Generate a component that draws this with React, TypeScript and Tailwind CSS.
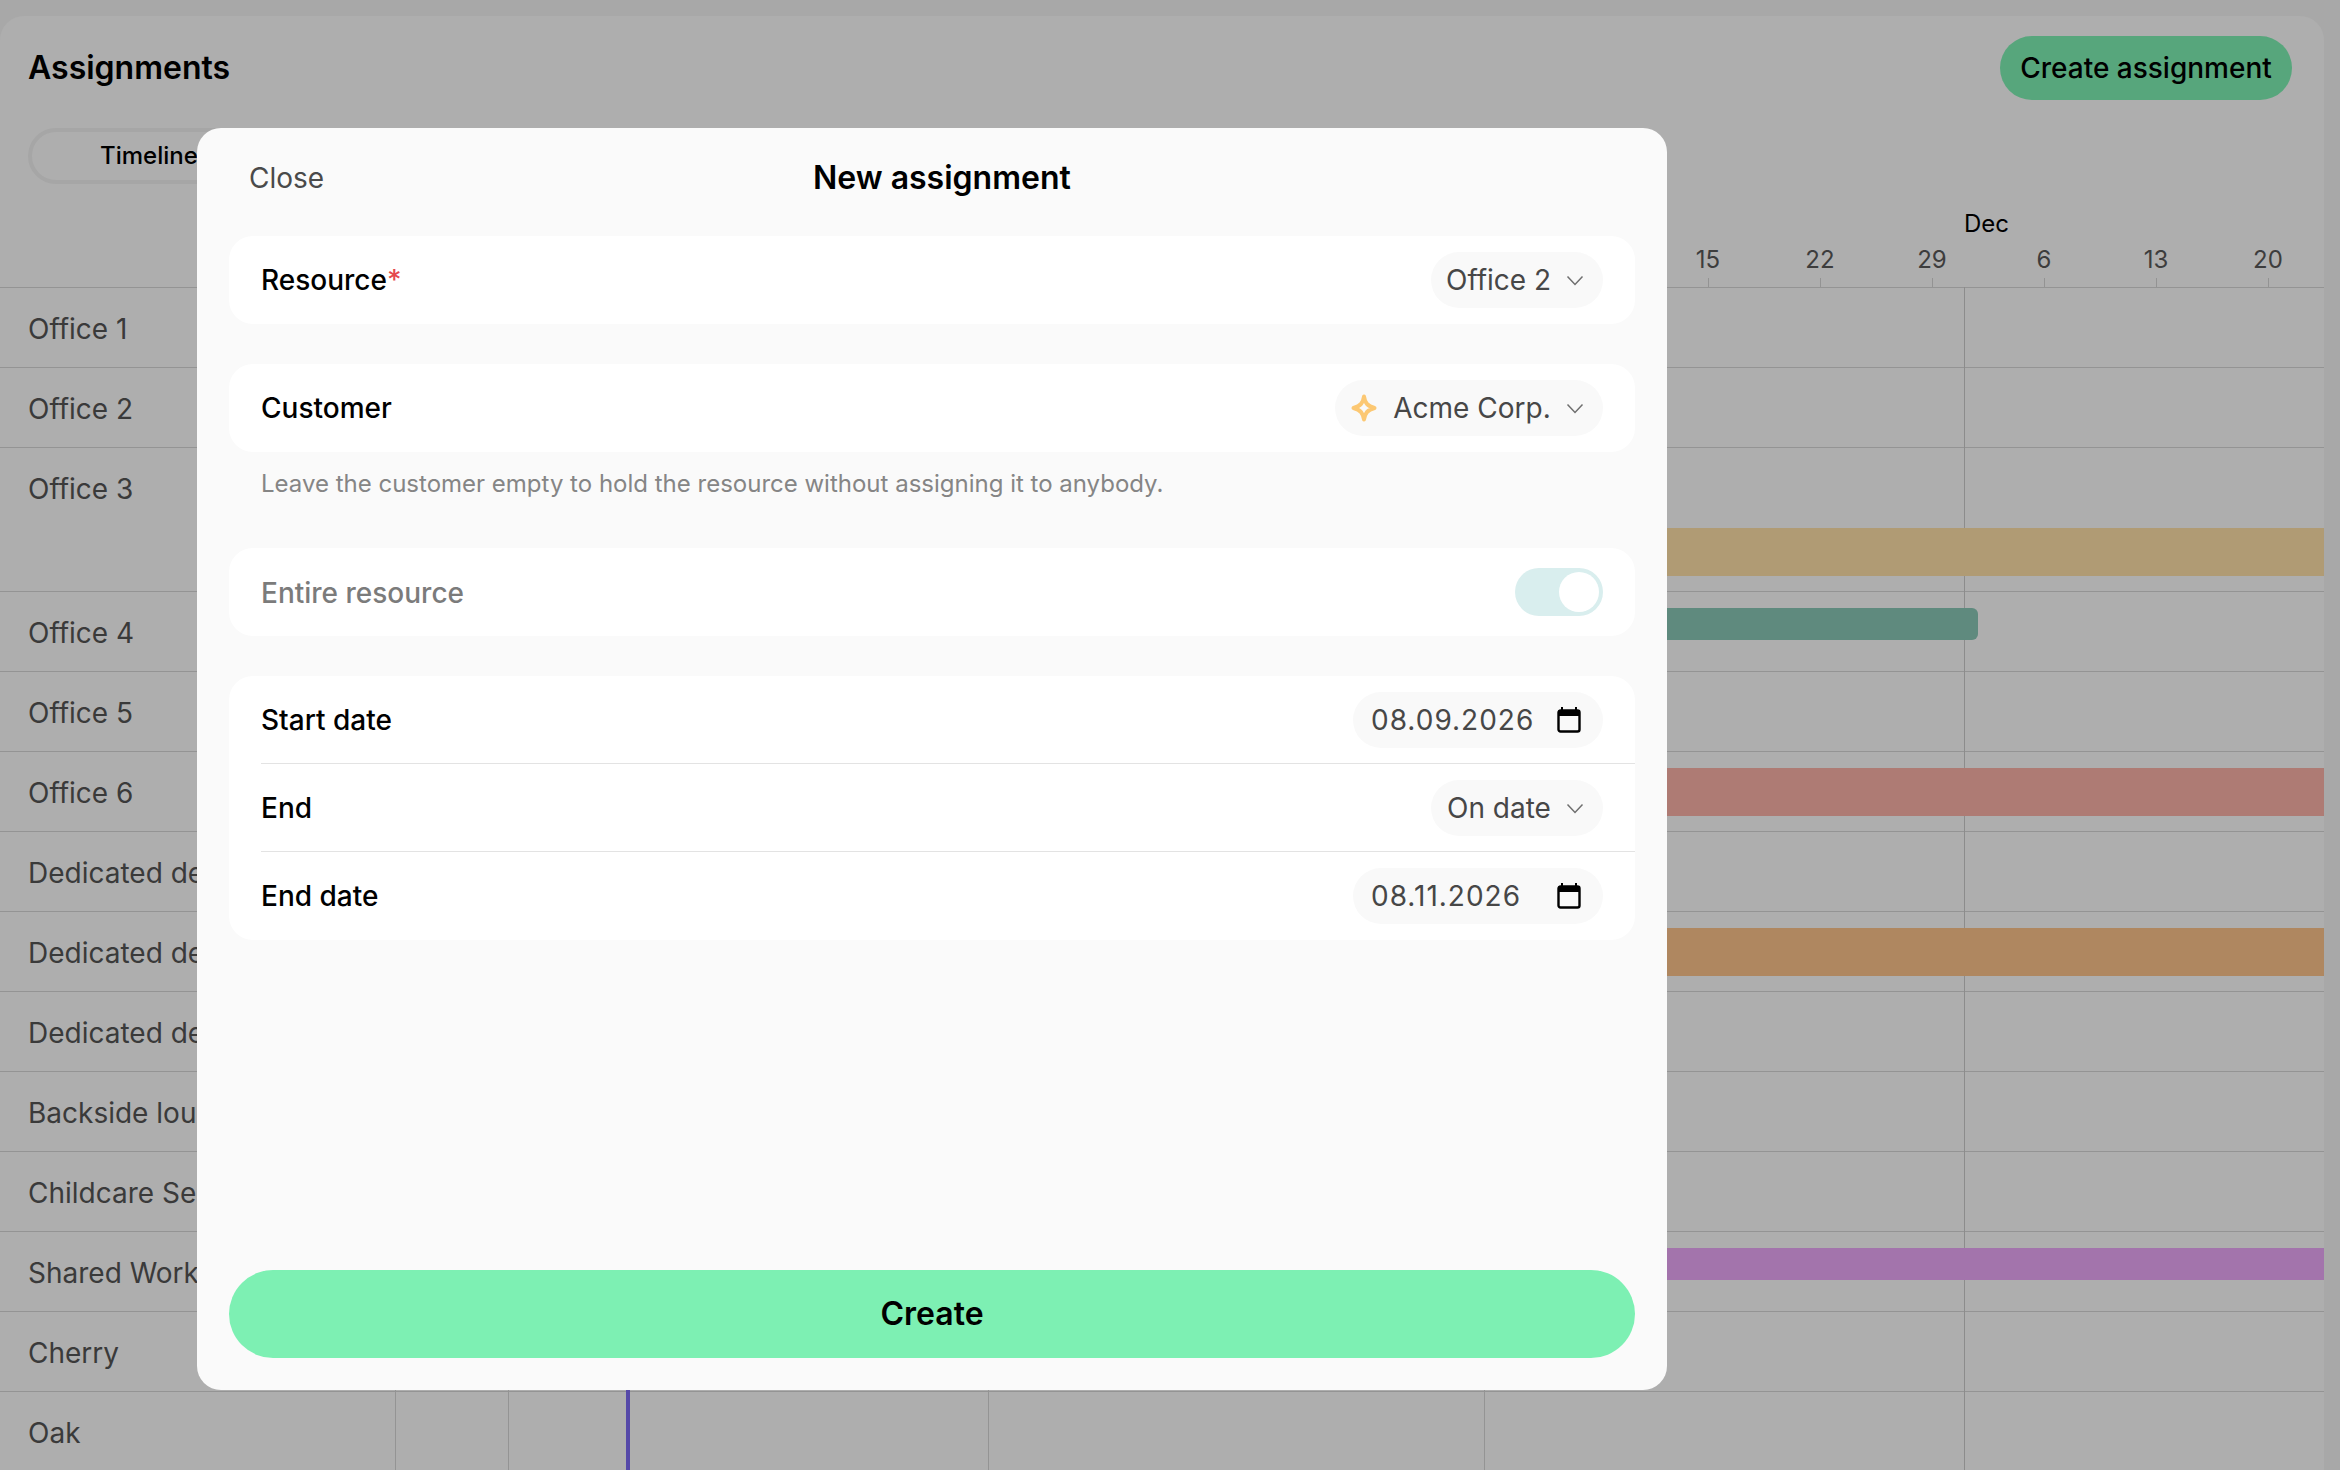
import React from "react";

const F = "[font-family:Inter,'Liberation_Sans',sans-serif]";

const rows = [
  { label: "Office 1", h: "h-[80px]" },
  { label: "Office 2", h: "h-[80px]" },
  { label: "Office 3", h: "h-[144px]", bar: "left-[1200px] right-0 top-[80px] h-[48px] bg-[#b09b74]" },
  { label: "Office 4", h: "h-[80px]", bar: "left-[1200px] right-[346px] top-[16px] h-[32px] rounded-[6px] bg-[#5f8a7e]" },
  { label: "Office 5", h: "h-[80px]" },
  { label: "Office 6", h: "h-[80px]", bar: "left-[1200px] right-0 top-[16px] h-[48px] bg-[#ae7b74]" },
  { label: "Dedicated desk 1", h: "h-[80px]" },
  { label: "Dedicated desk 2", h: "h-[80px]", bar: "left-[1200px] right-0 top-[16px] h-[48px] bg-[#af8760]" },
  { label: "Dedicated desk 3", h: "h-[80px]" },
  { label: "Backside lounge", h: "h-[80px]" },
  { label: "Childcare Service", h: "h-[80px]" },
  { label: "Shared Workspace", h: "h-[80px]", bar: "left-[1200px] right-0 top-[16px] h-[32px] bg-[#a374ac]" },
  { label: "Cherry", h: "h-[80px]" },
  { label: "Oak", h: "h-[80px]" },
];

const ticks = ["15", "22", "29", "6", "13", "20"];

function Chevron() {
  return (
    <svg width="18" height="18" viewBox="0 0 18 18" fill="none" stroke="#6f6f6f" strokeWidth="1.5" className="shrink-0">
      <path d="M1.500 5.500l7.500 8 7.500-8" />
    </svg>
  );
}

function Calendar() {
  return (
    <svg width="24" height="26" viewBox="0 0 24 26" className="shrink-0">
      <path d="M5 0v4M19 0v4" stroke="#000" strokeWidth="2" />
      <rect x="1.500" y="3.500" width="21" height="21" rx="2" fill="none" stroke="#000" strokeWidth="2.400" />
      <rect x="1.500" y="3" width="21" height="6" fill="#000" />
    </svg>
  );
}

function Sparkle() {
  return (
    <svg width="28" height="28" viewBox="0 0 28 28" className="shrink-0">
      <path
        d="M14 2.500c1 6.500 3.300 9.500 10.500 11.500-7.200 2-9.500 5-10.500 11.500-1-6.500-3.300-9.500-10.500-11.500 7.200-2 9.500-5 10.500-11.500z"
        fill="none"
        stroke="#fcc873"
        strokeWidth="4"
        strokeLinejoin="round"
      />
    </svg>
  );
}

function Pill({ children, className = "" }: { children: React.ReactNode; className?: string }) {
  return (
    <div className={`flex h-[56px] items-center rounded-[28px] bg-[#f9f9f9] text-[28px] text-[#474747] ${className}`}>
      {children}
    </div>
  );
}

function Row({ label, children, divider }: { label: React.ReactNode; children: React.ReactNode; divider?: boolean }) {
  return (
    <div className="relative flex h-[88px] items-center justify-between pl-[32px] pr-[32px]">
      <div className="text-[28px] font-medium text-black">{label}</div>
      {children}
      {divider && <div className="absolute bottom-0 left-[32px] right-0 h-px bg-[#e3e3e3]" />}
    </div>
  );
}

export default function App() {
  return (
    <div className={`relative h-[1470px] w-[2340px] overflow-hidden bg-[#a8a8a8] pr-[16px] pt-[16px] ${F}`}>
      <div className="relative flex h-[1454px] flex-col overflow-hidden rounded-tl-[24px] rounded-tr-[24px] bg-[#aeaeae]">
        <div className="flex h-[104px] shrink-0 items-start justify-between pl-[28px] pr-[32px] pt-[20px]">
          <div className="pt-[10px] text-[32px] font-semibold leading-[44px] text-black">Assignments</div>
          <button className="flex h-[64px] w-[292px] items-center justify-center rounded-[32px] bg-[#57a67c] text-[28px] font-medium text-black">
            Create assignment
          </button>
        </div>

        <div className="relative h-[167px] shrink-0 pl-[28px] pt-[8px]">
          <div className="flex h-[56px] w-[420px] items-center rounded-[28px] border-[4px] border-[#a6a6a6] pl-[68px] text-[24px] font-medium text-black">
            Timeline
          </div>
          <div className="absolute left-[1964px] top-[88px] text-[24px] leading-[32px] text-black">Dec</div>
          {ticks.map((t, i) => (
            <div key={t} className="absolute top-[124px] w-[60px] -translate-x-1/2 text-center text-[24px] leading-[32px] text-[#3d3d3d]" style={{ left: 1708 + i * 112 }}>
              {t}
              <div className="absolute left-1/2 top-[34px] h-[9px] w-px bg-[#939393]" />
            </div>
          ))}
        </div>

        <div className="relative flex-1">
          {rows.map((r) => (
            <div key={r.label} className={`relative border-t border-[#949494] ${r.h} pl-[28px]`}>
              <div className="flex h-[81px] items-center text-[28px] text-[#3a3a3a]">{r.label}</div>
              {r.bar && <div className={`absolute z-10 ${r.bar}`} />}
            </div>
          ))}
          <div className="absolute bottom-0 left-[395px] top-0 w-px bg-[#949494]" />
          <div className="absolute bottom-0 left-[508px] top-0 w-px bg-[#949494]" />
          <div className="absolute bottom-0 left-[988px] top-0 w-px bg-[#949494]" />
          <div className="absolute bottom-0 left-[1484px] top-0 w-px bg-[#949494]" />
          <div className="absolute bottom-0 left-[1964px] top-0 w-px bg-[#8c8c8c]" />
          <div className="absolute bottom-0 left-[626px] top-0 w-[4px] bg-[#5549a8]" />
        </div>
      </div>

      <div className="absolute left-[197px] top-[128px] z-20 flex h-[1262px] w-[1470px] flex-col rounded-[24px] bg-[#fafafa] px-[32px] pb-[32px]">
        <div className="relative flex h-[108px] shrink-0 items-center pb-[8px]">
          <div className="pl-[20px] text-[28px] text-[#4a4a4a]">Close</div>
          <div className="absolute left-[584px] top-0 flex h-[100px] items-center text-[32px] font-semibold text-black">New assignment</div>
        </div>

        <div className="shrink-0 rounded-[24px] bg-white">
          <Row label={<>Resource<span className="text-[#e5484d]">*</span></>}>
            <Pill className="w-[172px] justify-between pl-[15px] pr-[19px]">
              <span>Office 2</span>
              <Chevron />
            </Pill>
          </Row>
        </div>

        <div className="mt-[40px] shrink-0 rounded-[24px] bg-white">
          <Row label="Customer">
            <Pill className="w-[268px] justify-between pl-[15px] pr-[19px]">
              <Sparkle />
              <span>Acme Corp.</span>
              <Chevron />
            </Pill>
          </Row>
        </div>

        <div className="flex h-[48px] shrink-0 items-center pl-[32px] pt-[16px] text-[24px] text-[#858585]">
          Leave the customer empty to hold the resource without assigning it to anybody.
        </div>

        <div className="mt-[48px] shrink-0 rounded-[24px] bg-white">
          <Row label={<span className="relative top-px text-[#7b7b7b]">Entire resource</span>}>
            <div className="flex h-[48px] w-[88px] items-center justify-end rounded-[24px] bg-[#d9eeee] pr-[4px]">
              <div className="h-[40px] w-[40px] rounded-full bg-white" />
            </div>
          </Row>
        </div>

        <div className="mt-[40px] shrink-0 rounded-[24px] bg-white">
          <Row label="Start date" divider>
            <Pill className="w-[250px] justify-between pl-[18px] pr-[22px]">
              <span className="tracking-[1px]">08.09.2026</span>
              <Calendar />
            </Pill>
          </Row>
          <Row label="End" divider>
            <Pill className="w-[172px] justify-between pl-[16px] pr-[19px]">
              <span>On date</span>
              <Chevron />
            </Pill>
          </Row>
          <Row label="End date">
            <Pill className="w-[250px] justify-between pl-[18px] pr-[22px]">
              <span className="tracking-[1px]">08.11.2026</span>
              <Calendar />
            </Pill>
          </Row>
        </div>

        <button className="mt-auto h-[88px] w-full shrink-0 rounded-[44px] bg-[#7df0b3] text-[32px] font-semibold text-black">
          Create
        </button>
      </div>
    </div>
  );
}
